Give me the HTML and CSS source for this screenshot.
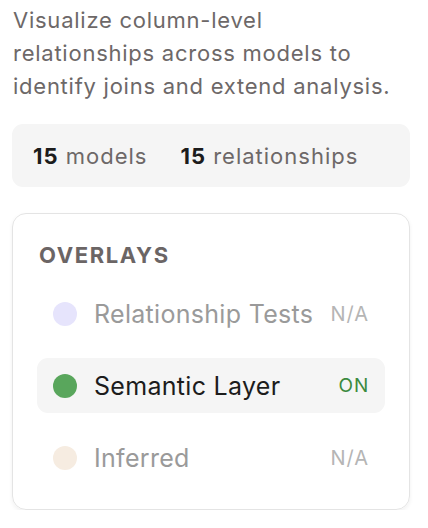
FILE: index.html
```html
<!DOCTYPE html>
<html>
<head>
<meta charset="utf-8">
<link rel="stylesheet" href="styles.css">
</head>
<body>
<div class="panel">
  <p class="desc">Visualize column-level relationships across models to identify joins and extend analysis.</p>
  <div class="stats">
    <span class="stat"><b>15</b> models</span>
    <span class="stat"><b>15</b> relationships</span>
  </div>
  <div class="card">
    <div class="card-title">OVERLAYS</div>
    <div class="rows">
      <div class="row muted">
        <span class="dot dot-purple"></span>
        <span class="label">Relationship Tests</span>
        <span class="status">N/A</span>
      </div>
      <div class="row active">
        <span class="dot dot-green"></span>
        <span class="label">Semantic Layer</span>
        <span class="status on">ON</span>
      </div>
      <div class="row muted">
        <span class="dot dot-beige"></span>
        <span class="label">Inferred</span>
        <span class="status">N/A</span>
      </div>
    </div>
  </div>
</div>
</body>
</html>
```
FILE: styles.css
```css
* { box-sizing: border-box; }
html, body { margin: 0; padding: 0; background: #fff; }
body { font-family: Inter, "Noto Sans", "Liberation Sans", sans-serif; }
.panel { padding: 4px 18px 0 12px; display: flex; flex-direction: column; }
.desc {
  margin: 0 14px 0 1px;
  font-size: 22px;
  line-height: 33px;
  letter-spacing: 0.75px;
  color: #6d6868;
}
.stats {
  margin-top: 21px;
  background: #f5f5f5;
  border-radius: 11px;
  height: 63px;
  display: flex;
  align-items: center;
  padding: 0 21px;
  gap: 33px;
  font-size: 22px;
  letter-spacing: 1px;
  color: #6d6868;
}
.stats b { color: #1c1c1c; font-weight: 700; }
.card {
  margin-top: 26px;
  border: 1px solid #e4e4e4;
  border-radius: 14px;
  box-shadow: 0 2px 4px rgba(0,0,0,0.06);
  padding: 29px 24px 24px 24px;
}
.card-title {
  font-size: 22px;
  font-weight: 700;
  letter-spacing: 1.6px;
  color: #6b6565;
  padding-left: 2px;
  line-height: 24px;
}
.rows { margin-top: 19px; display: flex; flex-direction: column; gap: 17px; }
.row {
  height: 55px;
  display: flex;
  align-items: center;
  padding: 0 16px 0 16px;
  border-radius: 11px;
}
.row.active { background: #f5f5f5; }
.dot { width: 24px; height: 24px; border-radius: 50%; flex: none; }
.dot-purple { background: #e6e4fc; }
.dot-green { background: #59a65c; }
.dot-beige { background: #f6ece1; }
.label { margin-left: 17px; font-size: 25px; letter-spacing: 0.3px; color: #1c1c1c; flex: 1; }
.muted .label { color: #9a9a9a; }
.status { font-size: 20px; color: #b5b5b5; letter-spacing: 1px; }
.status.on { font-size: 19px; color: #3c8a3e; letter-spacing: 0.8px; }
```
